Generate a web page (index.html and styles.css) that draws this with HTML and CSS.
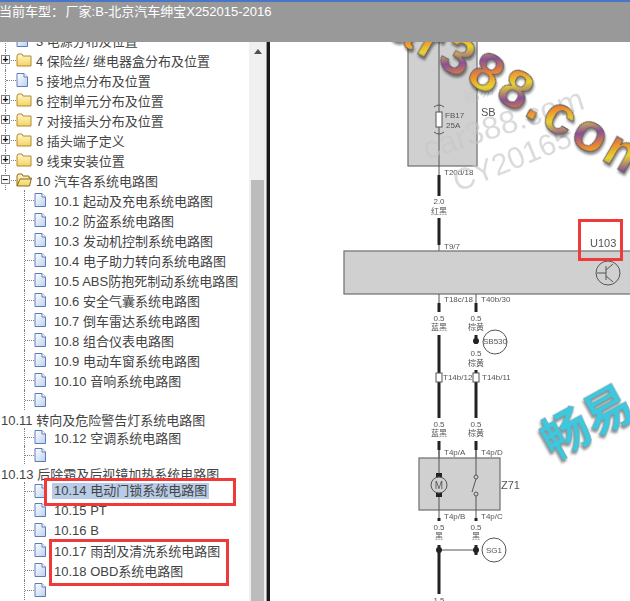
FILE: index.html
```html
<!DOCTYPE html>
<html lang="zh-CN">
<head>
<meta charset="UTF-8">
<meta name="viewport" content="width=device-width, initial-scale=1.0">
<title>当前车型</title>
<link rel="stylesheet" href="styles.css">
</head>
<body>

<svg class="defs" width="0" height="0">
  <defs>
    <linearGradient id="folderFill" x1="0" y1="0" x2="0" y2="1">
      <stop offset="0" stop-color="#fff8cc"/>
      <stop offset="1" stop-color="#f5d360"/>
    </linearGradient>
    <linearGradient id="docFill" x1="0" y1="0" x2="1" y2="1">
      <stop offset="0" stop-color="#ffffff"/>
      <stop offset="1" stop-color="#bcd0f0"/>
    </linearGradient>
    <linearGradient id="markFill" gradientUnits="userSpaceOnUse" x1="0" y1="0" x2="26" y2="34" spreadMethod="repeat">
      <stop offset="0" stop-color="#e8d430"/>
      <stop offset="0.35" stop-color="#8a4f9a"/>
      <stop offset="0.7" stop-color="#ee8a2e"/>
      <stop offset="1" stop-color="#e8d430"/>
    </linearGradient>
    <symbol id="folder" viewBox="0 0 16 14">
      <path d="M1 3 L2 1 H6 L7 3 H15 V13 H1 Z" fill="url(#folderFill)" stroke="#b08a30"/>
    </symbol>
    <symbol id="folderOpen" viewBox="0 0 16 14">
      <path d="M1 3 L2 1 H6 L7 3 H13 V5 H15.5 L13.5 13 H1 Z" fill="url(#folderFill)" stroke="#8a6a20"/>
      <path d="M1 13 L4 6 H15" fill="none" stroke="#8a6a20"/>
    </symbol>
    <symbol id="doc" viewBox="0 0 12 14">
      <path d="M1 .5 H8 L11.5 4 V13.5 H1 Z" fill="url(#docFill)" stroke="#5c7cb8"/>
      <path d="M8 .5 V4 H11.5" fill="#fff" stroke="#5c7cb8"/>
    </symbol>
  </defs>
</svg>

<div class="app">
  <header class="topbar">当前车型： 厂家:B-北京汽车绅宝X252015-2016</header>

  <div class="main">
    <nav class="tree-pane">
      <ul class="tree">
        <li class="row root"><span class="branch"></span><svg class="ico-doc"><use href="#doc"/></svg><span class="label">3 电源分布及位置</span></li>
        <li class="row root"><span class="branch"><span class="exp">+</span></span><svg class="ico-folder"><use href="#folder"/></svg><span class="label">4 保险丝/ 继电器盒分布及位置</span></li>
        <li class="row root"><span class="branch"></span><svg class="ico-doc"><use href="#doc"/></svg><span class="label">5 接地点分布及位置</span></li>
        <li class="row root"><span class="branch"><span class="exp">+</span></span><svg class="ico-folder"><use href="#folder"/></svg><span class="label">6 控制单元分布及位置</span></li>
        <li class="row root"><span class="branch"><span class="exp">+</span></span><svg class="ico-folder"><use href="#folder"/></svg><span class="label">7 对接插头分布及位置</span></li>
        <li class="row root"><span class="branch"><span class="exp">+</span></span><svg class="ico-folder"><use href="#folder"/></svg><span class="label">8 插头端子定义</span></li>
        <li class="row root"><span class="branch"><span class="exp">+</span></span><svg class="ico-folder"><use href="#folder"/></svg><span class="label">9 线束安装位置</span></li>
        <li class="row root"><span class="branch"><span class="exp">−</span></span><svg class="ico-folder"><use href="#folderOpen"/></svg><span class="label">10 汽车各系统电路图</span></li>

        <li class="row child"><span class="branch"></span><svg class="ico-doc"><use href="#doc"/></svg><span class="label">10.1 起动及充电系统电路图</span></li>
        <li class="row child"><span class="branch"></span><svg class="ico-doc"><use href="#doc"/></svg><span class="label">10.2 防盗系统电路图</span></li>
        <li class="row child"><span class="branch"></span><svg class="ico-doc"><use href="#doc"/></svg><span class="label">10.3 发动机控制系统电路图</span></li>
        <li class="row child"><span class="branch"></span><svg class="ico-doc"><use href="#doc"/></svg><span class="label">10.4 电子助力转向系统电路图</span></li>
        <li class="row child"><span class="branch"></span><svg class="ico-doc"><use href="#doc"/></svg><span class="label">10.5 ABS防抱死制动系统电路图</span></li>
        <li class="row child"><span class="branch"></span><svg class="ico-doc"><use href="#doc"/></svg><span class="label">10.6 安全气囊系统电路图</span></li>
        <li class="row child"><span class="branch"></span><svg class="ico-doc"><use href="#doc"/></svg><span class="label">10.7 倒车雷达系统电路图</span></li>
        <li class="row child"><span class="branch"></span><svg class="ico-doc"><use href="#doc"/></svg><span class="label">10.8 组合仪表电路图</span></li>
        <li class="row child"><span class="branch"></span><svg class="ico-doc"><use href="#doc"/></svg><span class="label">10.9 电动车窗系统电路图</span></li>
        <li class="row child"><span class="branch"></span><svg class="ico-doc"><use href="#doc"/></svg><span class="label">10.10 音响系统电路图</span></li>
        <li class="row child"><span class="branch"></span><svg class="ico-doc"><use href="#doc"/></svg></li>

        <li class="row bare tight"><span class="label">10.11 转向及危险警告灯系统电路图</span></li>
        <li class="row child tight"><span class="branch"></span><svg class="ico-doc"><use href="#doc"/></svg><span class="label">10.12 空调系统电路图</span></li>
        <li class="row child tight"><span class="branch"></span><svg class="ico-doc"><use href="#doc"/></svg></li>
        <li class="row bare tight"><span class="label">10.13 后除霜及后视镜加热系统电路图</span></li>
        <li class="row child tight"><span class="branch"></span><svg class="ico-doc"><use href="#doc"/></svg><span class="label selected">10.14 电动门锁系统电路图</span></li>
        <li class="row child"><span class="branch"></span><svg class="ico-doc"><use href="#doc"/></svg><span class="label">10.15 PT</span></li>
        <li class="row child"><span class="branch"></span><svg class="ico-doc"><use href="#doc"/></svg><span class="label">10.16 B</span></li>
        <li class="row child"><span class="branch"></span><svg class="ico-doc"><use href="#doc"/></svg><span class="label">10.17 雨刮及清洗系统电路图</span></li>
        <li class="row child"><span class="branch"></span><svg class="ico-doc"><use href="#doc"/></svg><span class="label">10.18 OBD系统电路图</span></li>
        <li class="row child"><span class="branch"></span><svg class="ico-doc"><use href="#doc"/></svg></li>
      </ul>
      <div class="mark-box box-a"></div>
      <div class="mark-box box-b"></div>
    </nav>

    <div class="scrollbar">
      <span class="arrow-up"></span>
      <span class="thumb"></span>
    </div>
    <div class="splitter"></div>

    <div class="diagram">
      <svg class="sheet" viewBox="270 42 360 559" width="360" height="559">
        <g class="drawing">
          <!-- SB fuse box -->
          <rect class="unit" x="408" y="40" width="69" height="126"/>
          <path class="thin" d="M439 40 V175 M439 245 V251"/>
          <rect class="fuse" x="436" y="112" width="6" height="15"/>
          <path class="thin" d="M434 107 Q439 103 444 107 M434 132 Q439 136 444 132"/>
          <text class="t8" x="445" y="115">FB17</text>
          <text class="t8" x="446" y="125">25A</text>
          <text class="t11" x="481" y="112">SB</text>
          <text class="t8" x="444" y="172">T20d/18</text>
          <path class="thick" d="M439 175 V196 M439 218 V245"/>
          <text class="t8 mid" x="439" y="201">2.0</text>
          <text class="t8 mid" x="439" y="211">红黑</text>
          <text class="t8" x="444" y="246">T9/7</text>

          <!-- U103 -->
          <rect class="unit" x="344" y="251" width="300" height="43"/>
          <text class="t11" x="590" y="243">U103</text>
          <circle class="ring" cx="608" cy="273" r="12"/>
          <path class="thin" d="M597 273 H606 M606 266 V280 M606 270 L613 264 M606 276 L613 282"/>

          <!-- lower wires -->
          <path class="thin" d="M439 294 V303 M476 294 V303 M439 450 V458 M476 450 V458"/>
          <text class="t8" x="444" y="299">T18c/18</text>
          <text class="t8" x="481" y="299">T40b/30</text>
          <path class="thick" d="M439 303 V312 M476 303 V312 M439 335 V418 M476 335 V344 M476 370 V418 M439 441 V450 M476 441 V450"/>
          <text class="t8 mid" x="439" y="318">0.5</text>
          <text class="t8 mid" x="439" y="327">蓝黑</text>
          <text class="t8 mid" x="476" y="318">0.5</text>
          <text class="t8 mid" x="476" y="327">棕黄</text>
          <circle class="dot" cx="476" cy="341" r="3"/>
          <circle class="ring" cx="495" cy="342" r="12"/>
          <text class="t8 mid" x="495" y="341">SB530</text>
          <text class="t8 mid" x="476" y="353">0.5</text>
          <text class="t8 mid" x="476" y="363">棕黄</text>
          <rect class="fuse" x="436" y="373" width="6" height="9"/>
          <rect class="fuse" x="473" y="373" width="6" height="9"/>
          <text class="t8" x="443" y="377">T14b/12</text>
          <text class="t8" x="482" y="377">T14b/11</text>
          <text class="t8 mid" x="439" y="424">0.5</text>
          <text class="t8 mid" x="439" y="433">蓝黑</text>
          <text class="t8 mid" x="476" y="424">0.5</text>
          <text class="t8 mid" x="476" y="433">棕黄</text>
          <text class="t8" x="444" y="452">T4p/A</text>
          <text class="t8" x="481" y="452">T4p/D</text>

          <!-- Z71 -->
          <rect class="unit" x="419" y="458" width="81" height="52"/>
          <path class="thin" d="M439 450 V518 M476 450 V477 M476 496 V518 M476 479 L472 492"/>
          <rect class="block" x="436" y="473" width="6" height="5"/>
          <rect class="block" x="436" y="492" width="6" height="5"/>
          <circle class="ring solid" cx="439" cy="485" r="8"/>
          <text class="t10 mid" x="439" y="485">M</text>
          <circle class="ring solid" cx="476" cy="477" r="2"/>
          <circle class="ring solid" cx="476" cy="494" r="2"/>
          <text class="t11" x="501" y="485">Z71</text>
          <text class="t8" x="444" y="516">T4p/B</text>
          <text class="t8" x="481" y="516">T4p/C</text>
          <path class="thick" d="M439 518 V521 M476 518 V521"/>
          <text class="t8 mid" x="439" y="527">0.5</text>
          <text class="t8 mid" x="439" y="536">黑</text>
          <text class="t8 mid" x="476" y="527">0.5</text>
          <text class="t8 mid" x="476" y="536">黑</text>
          <path class="thin" d="M439 550 H476"/>
          <circle class="dot" cx="439" cy="550" r="3"/>
          <circle class="dot" cx="476" cy="550" r="3"/>
          <path class="thick" d="M439 545 V594 M476 545 V555"/>
          <circle class="ring" cx="494" cy="550" r="12"/>
          <text class="t8 mid" x="494" y="550">SG1</text>
          <text class="t8 mid" x="439" y="600">1.5</text>
        </g>

        <!-- watermarks -->
        <text class="wm-grey" transform="translate(427 160) rotate(-18)">car388.com</text>
        <text class="wm-id" transform="translate(458 192) rotate(-22)">CY20165</text>
        <text class="wm-small" transform="translate(466 104) rotate(-22)">畅易</text>
        <text class="wm-color" transform="translate(356 18) rotate(30)">car388.com</text>
        <text class="wm-cyan" transform="translate(553 460) rotate(-29)">畅易</text>

        <rect class="red" x="579.5" y="220.5" width="42" height="39"/>
      </svg>
    </div>
  </div>
</div>

</body>
</html>
```

FILE: styles.css
```css
* { box-sizing: border-box; }

body {
    margin: 0;
    background: #fff;
    font-family: "Liberation Sans", "Noto Sans CJK SC", sans-serif;
}

.defs { position: absolute; }

.app {
    display: flex;
    flex-direction: column;
    width: 630px;
    height: 601px;
    overflow: hidden;
}

.topbar {
    flex: none;
    height: 42px;
    padding-top: 2px;
    background: #999;
    border-top: 2px solid #4a76c8;
    color: #fff;
    font-size: 13px;
    line-height: 16px;
    text-indent: -1px;
    word-spacing: -2px;
    white-space: nowrap;
}

.main {
    display: flex;
    flex: 1;
    min-height: 0;
}

/* tree */
.tree-pane {
    position: relative;
    flex: none;
    width: 249px;
    overflow: hidden;
}

.tree {
    list-style: none;
    margin: -12px 0 0 0;
    padding: 0;
}

.row {
    display: flex;
    align-items: center;
    height: 20px;
    font-size: 13px;
    color: #444;
    white-space: nowrap;
}
.row.tight { height: 18px; }

.branch {
    position: relative;
    align-self: stretch;
    flex: none;
    border-left: 1px dotted #808080;
}
.branch::after {
    content: "";
    position: absolute;
    left: 0;
    right: 0;
    top: 50%;
    border-top: 1px dotted #808080;
}

.root .branch { width: 11px; margin-left: 5px; }
.child .branch { width: 10px; margin-left: 24px; }

.exp {
    position: absolute;
    z-index: 1;
    left: -5px;
    top: 5px;
    width: 9px;
    height: 9px;
    background: #fff;
    border: 1px solid #808080;
    color: #000;
    font-size: 10px;
    font-weight: bold;
    line-height: 7px;
    text-align: center;
}

.ico-folder { flex: none; width: 16px; height: 14px; }
.ico-doc { flex: none; width: 12px; height: 14px; }

.root .label { margin-left: 4px; }
.root .ico-doc + .label { margin-left: 8px; }
.child .label { margin-left: 6px; padding: 0 2px; }
.bare .label { margin-left: 1px; }

.selected { background: #b8cce8; line-height: 16px; }

.mark-box {
    position: absolute;
    border: 3px solid #f03a3a;
}
.box-a { left: 44px; top: 436px; width: 192px; height: 28px; }
.box-b { left: 49px; top: 497px; width: 180px; height: 47px; }

/* scrollbar and splitter */
.scrollbar {
    position: relative;
    flex: none;
    width: 17px;
    background: #f0f0f0;
}
.arrow-up {
    position: absolute;
    left: 5px;
    top: 7px;
    border-left: 4px solid transparent;
    border-right: 4px solid transparent;
    border-bottom: 5px solid #505050;
}
.thumb {
    position: absolute;
    left: 2px;
    right: 2px;
    top: 138px;
    bottom: 0;
    background: #bcbcbc;
}

.splitter {
    flex: none;
    width: 4px;
    background: #1a1a1a;
    border-left: 1px solid #999;
}

/* wiring diagram */
.diagram { flex: 1; min-width: 0; overflow: hidden; }
.sheet { display: block; }

.drawing { filter: blur(.35px); }

.unit { fill: #d0d0d0; stroke: #777; stroke-width: 1.3; }
.thin { fill: none; stroke: #555; stroke-width: 1; }
.thick { fill: none; stroke: #222; stroke-width: 3; }
.fuse { fill: #fff; stroke: #555; stroke-width: 1; }
.block { fill: #222; }
.dot { fill: #222; }
.ring { fill: none; stroke: #555; stroke-width: 1; }
.ring.solid { fill: #d0d0d0; }

.t8, .t10, .t11 { fill: #555; dominant-baseline: central; }
.t8 { font-size: 8px; }
.t10 { font-size: 10px; }
.t11 { font-size: 11px; }
.mid { text-anchor: middle; }

.wm-grey, .wm-id { fill: #c8c8c8; opacity: .65; }
.wm-grey { font-size: 32px; }
.wm-id { font-size: 30px; }
.wm-small { fill: #c8c8c8; opacity: .6; font-size: 16px; }

.wm-color {
    fill: url(#markFill);
    stroke: #5a5a5a;
    stroke-width: .8;
    font-size: 54px;
    font-weight: bold;
    letter-spacing: 3.6px;
    filter: drop-shadow(2px 2px 1px rgba(0, 0, 0, .45));
}
.wm-cyan {
    fill: #3cc8de;
    stroke: #7a9aa2;
    stroke-width: .6;
    font-size: 48px;
    font-weight: bold;
    filter: drop-shadow(-2px 2px 1px rgba(70, 70, 70, .6));
}

.red { fill: none; stroke: #f03a3a; stroke-width: 3; }
```
